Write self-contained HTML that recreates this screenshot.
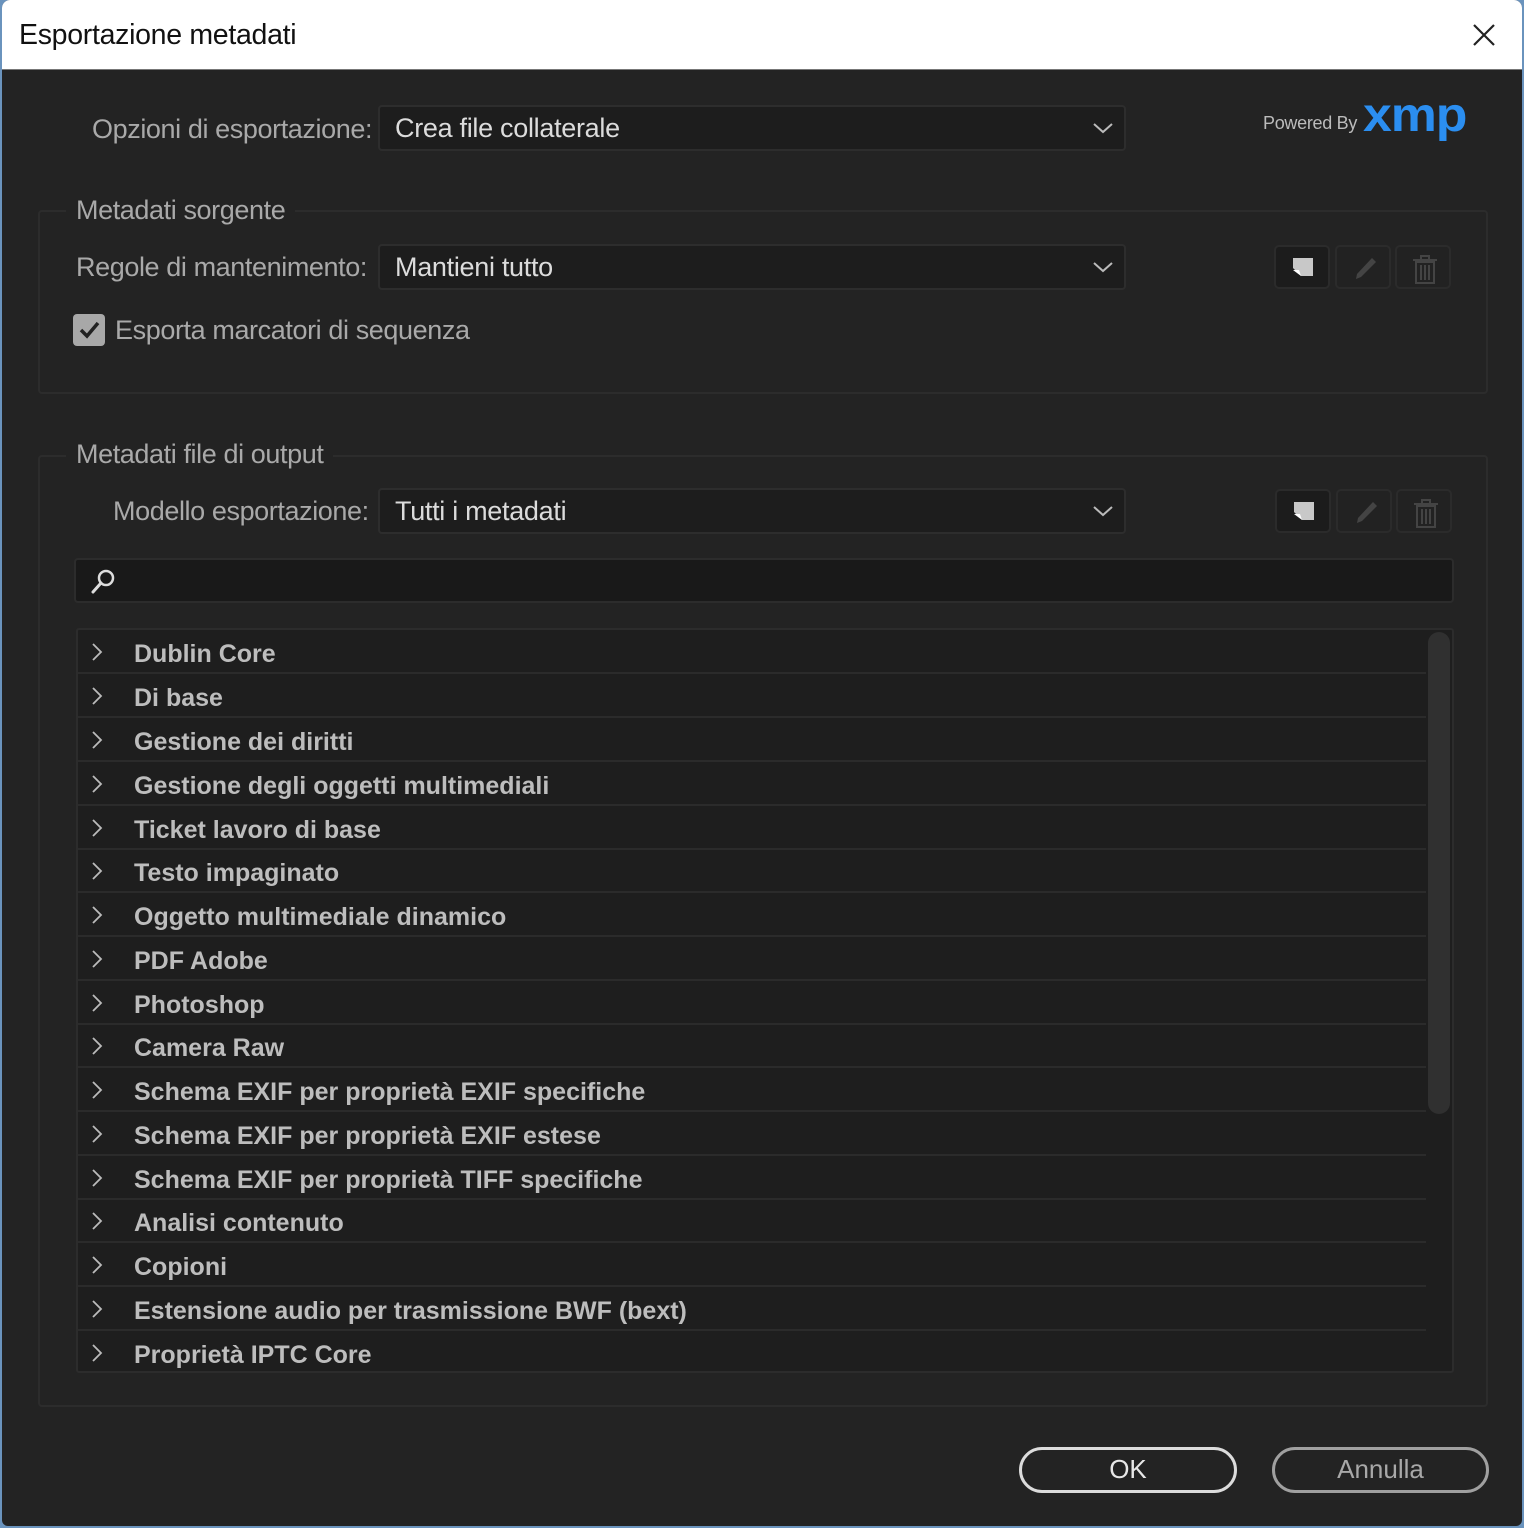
<!DOCTYPE html>
<html><head><meta charset="utf-8"><style>
*{margin:0;padding:0;box-sizing:border-box}
html,body{width:1524px;height:1528px;overflow:hidden;background:#6a93bd}
.win{position:absolute;left:2px;top:0;width:1520px;height:1526px;background:#232323;border-radius:8px 8px 6px 6px;overflow:hidden}
.title{position:absolute;left:0;top:0;width:1520px;height:70px;background:#fff;border-bottom:1px solid #777}
.title span{position:absolute;left:17px;top:19px;font:28.5px "Liberation Sans",sans-serif;color:#111;letter-spacing:-0.3px}
.t{position:absolute;font-family:"Liberation Sans",sans-serif;white-space:nowrap}
.lab{font-size:27px;color:#a9a9a9;letter-spacing:-0.4px}
.dd{position:absolute;background:#1d1d1d;border:2px solid #2d2d2d;border-radius:4px;height:46px}
.dd span{position:absolute;left:15px;top:6px;font:27px "Liberation Sans",sans-serif;color:#dcdcdc;letter-spacing:-0.3px}
.dd svg{position:absolute;right:10px;top:14px}
.grp{position:absolute;border:2px solid #2c2c2c;border-radius:4px}
.ib{position:absolute;width:56px;height:44px;border:2px solid #2b2b2b;border-radius:5px;background:#222}
.ib svg{position:absolute;left:13px;top:7px}
.list{position:absolute;left:74px;top:628px;width:1378px;height:745px;background:#1e1e1e;border:2px solid #2c2c2c;border-radius:3px;overflow:hidden}
.row{position:absolute;left:0;width:1348px;height:44px;border-bottom:2px solid #2b2b2b}
.row b{position:absolute;left:56px;top:10px;font:bold 25px "Liberation Sans",sans-serif;color:#bdbdbd;letter-spacing:0}
.row svg{position:absolute;left:12px;top:12px}
.btn{position:absolute;height:46px;border:3px solid #dcdcdc;border-radius:23px;font:26px "Liberation Sans",sans-serif;text-align:center;line-height:38px}
</style></head><body>
<div class="win">
<div class="title"><span>Esportazione metadati</span>
<svg style="position:absolute;left:1470px;top:23px" width="24" height="24"><path d="M2 2L22 22M22 2L2 22" stroke="#222" stroke-width="2.2"/></svg></div>

<div class="t lab" style="left:90px;top:114px">Opzioni di esportazione:</div>
<div class="dd" style="left:376px;top:105px;width:748px"><span>Crea file collaterale</span><svg width="22" height="14"><path d="M2 3L11 11L20 3" stroke="#bbb" stroke-width="2" fill="none"/></svg></div>
<div class="t" style="left:1261px;top:113px;font-size:18px;color:#bbb;letter-spacing:-0.3px">Powered By</div>
<div class="t" style="left:1361px;top:88px;font:bold 48px 'Liberation Sans',sans-serif;color:#2b8ef0;letter-spacing:-1px;transform:scaleX(1.08);transform-origin:left">xmp</div>

<div class="grp" style="left:36px;top:210px;width:1450px;height:184px"></div>
<div class="t lab" style="left:64px;top:195px;background:#232323;padding:0 10px">Metadati sorgente</div>
<div class="t lab" style="left:74px;top:252px">Regole di mantenimento:</div>
<div class="dd" style="left:376px;top:244px;width:748px"><span>Mantieni tutto</span><svg width="22" height="14"><path d="M2 3L11 11L20 3" stroke="#bbb" stroke-width="2" fill="none"/></svg></div>
<div style="position:absolute;left:71px;top:314px;width:32px;height:32px;background:#a8a8a8;border-radius:4px"><svg width="32" height="32"><path d="M8 16L14 22L25 9" stroke="#222" stroke-width="3.5" fill="none"/></svg></div>
<div class="t lab" style="left:113px;top:315px">Esporta marcatori di sequenza</div>

<div class="ib" style="left:1272px;top:245px;background:#1c1c1c"><svg width="30" height="30"><path d="M4 4H24V22H12L4 14Z" fill="#c8c8c8"/><path d="M4 16L10 16L12 22Z" fill="#fff"/></svg></div>
<div class="ib" style="left:1333px;top:245px"><svg width="30" height="30"><path d="M22 4L26 8L11 23L6 25L7 20Z" fill="#444"/></svg></div>
<div class="ib" style="left:1393px;top:245px"><svg width="30" height="32"><path d="M3 6H27M11 6V2H19V6M6 8H24V29H6Z" stroke="#444" stroke-width="2" fill="none"/><path d="M11 11V26M15 11V26M19 11V26" stroke="#444" stroke-width="2"/></svg></div>

<div class="grp" style="left:36px;top:455px;width:1450px;height:952px"></div>
<div class="t lab" style="left:64px;top:439px;background:#232323;padding:0 10px">Metadati file di output</div>
<div class="t lab" style="left:111px;top:496px">Modello esportazione:</div>
<div class="dd" style="left:376px;top:488px;width:748px"><span>Tutti i metadati</span><svg width="22" height="14"><path d="M2 3L11 11L20 3" stroke="#bbb" stroke-width="2" fill="none"/></svg></div>
<div class="ib" style="left:1273px;top:489px;background:#1c1c1c"><svg width="30" height="30"><path d="M4 4H24V22H12L4 14Z" fill="#c8c8c8"/><path d="M4 16L10 16L12 22Z" fill="#fff"/></svg></div>
<div class="ib" style="left:1334px;top:489px"><svg width="30" height="30"><path d="M22 4L26 8L11 23L6 25L7 20Z" fill="#444"/></svg></div>
<div class="ib" style="left:1394px;top:489px"><svg width="30" height="32"><path d="M3 6H27M11 6V2H19V6M6 8H24V29H6Z" stroke="#444" stroke-width="2" fill="none"/><path d="M11 11V26M15 11V26M19 11V26" stroke="#444" stroke-width="2"/></svg></div>

<div style="position:absolute;left:72px;top:558px;width:1380px;height:45px;background:#191919;border:2px solid #2c2c2c;border-radius:4px">
<svg style="position:absolute;left:12px;top:7px" width="30" height="30"><circle cx="18" cy="11" r="7" stroke="#ddd" stroke-width="2.5" fill="none"/><path d="M13 16L5 25" stroke="#ddd" stroke-width="3" stroke-linecap="round"/></svg></div>

<div class="list">
<div style="position:absolute;left:1350px;top:2px;width:22px;height:482px;background:#303030;border-radius:11px"></div>
<div class="row" style="top:0"><svg width="14" height="20"><path d="M3 2L11 10L3 18" stroke="#bbb" stroke-width="1.8" fill="none"/></svg><b>Dublin Core</b></div>
<div class="row" style="top:44px"><svg width="14" height="20"><path d="M3 2L11 10L3 18" stroke="#bbb" stroke-width="1.8" fill="none"/></svg><b>Di base</b></div>
<div class="row" style="top:88px"><svg width="14" height="20"><path d="M3 2L11 10L3 18" stroke="#bbb" stroke-width="1.8" fill="none"/></svg><b>Gestione dei diritti</b></div>
<div class="row" style="top:132px"><svg width="14" height="20"><path d="M3 2L11 10L3 18" stroke="#bbb" stroke-width="1.8" fill="none"/></svg><b>Gestione degli oggetti multimediali</b></div>
<div class="row" style="top:176px"><svg width="14" height="20"><path d="M3 2L11 10L3 18" stroke="#bbb" stroke-width="1.8" fill="none"/></svg><b>Ticket lavoro di base</b></div>
<div class="row" style="top:219px"><svg width="14" height="20"><path d="M3 2L11 10L3 18" stroke="#bbb" stroke-width="1.8" fill="none"/></svg><b>Testo impaginato</b></div>
<div class="row" style="top:263px"><svg width="14" height="20"><path d="M3 2L11 10L3 18" stroke="#bbb" stroke-width="1.8" fill="none"/></svg><b>Oggetto multimediale dinamico</b></div>
<div class="row" style="top:307px"><svg width="14" height="20"><path d="M3 2L11 10L3 18" stroke="#bbb" stroke-width="1.8" fill="none"/></svg><b>PDF Adobe</b></div>
<div class="row" style="top:351px"><svg width="14" height="20"><path d="M3 2L11 10L3 18" stroke="#bbb" stroke-width="1.8" fill="none"/></svg><b>Photoshop</b></div>
<div class="row" style="top:394px"><svg width="14" height="20"><path d="M3 2L11 10L3 18" stroke="#bbb" stroke-width="1.8" fill="none"/></svg><b>Camera Raw</b></div>
<div class="row" style="top:438px"><svg width="14" height="20"><path d="M3 2L11 10L3 18" stroke="#bbb" stroke-width="1.8" fill="none"/></svg><b>Schema EXIF per proprietà EXIF specifiche</b></div>
<div class="row" style="top:482px"><svg width="14" height="20"><path d="M3 2L11 10L3 18" stroke="#bbb" stroke-width="1.8" fill="none"/></svg><b>Schema EXIF per proprietà EXIF estese</b></div>
<div class="row" style="top:526px"><svg width="14" height="20"><path d="M3 2L11 10L3 18" stroke="#bbb" stroke-width="1.8" fill="none"/></svg><b>Schema EXIF per proprietà TIFF specifiche</b></div>
<div class="row" style="top:569px"><svg width="14" height="20"><path d="M3 2L11 10L3 18" stroke="#bbb" stroke-width="1.8" fill="none"/></svg><b>Analisi contenuto</b></div>
<div class="row" style="top:613px"><svg width="14" height="20"><path d="M3 2L11 10L3 18" stroke="#bbb" stroke-width="1.8" fill="none"/></svg><b>Copioni</b></div>
<div class="row" style="top:657px"><svg width="14" height="20"><path d="M3 2L11 10L3 18" stroke="#bbb" stroke-width="1.8" fill="none"/></svg><b>Estensione audio per trasmissione BWF (bext)</b></div>
<div class="row" style="top:701px;border-bottom:none"><svg width="14" height="20"><path d="M3 2L11 10L3 18" stroke="#bbb" stroke-width="1.8" fill="none"/></svg><b>Proprietà IPTC Core</b></div>
</div>

<div class="btn" style="left:1017px;top:1447px;width:218px;color:#e8e8e8">OK</div>
<div class="btn" style="left:1270px;top:1447px;width:217px;color:#a8a8a8;border-color:#a0a0a0">Annulla</div>
</div>
</body></html>
